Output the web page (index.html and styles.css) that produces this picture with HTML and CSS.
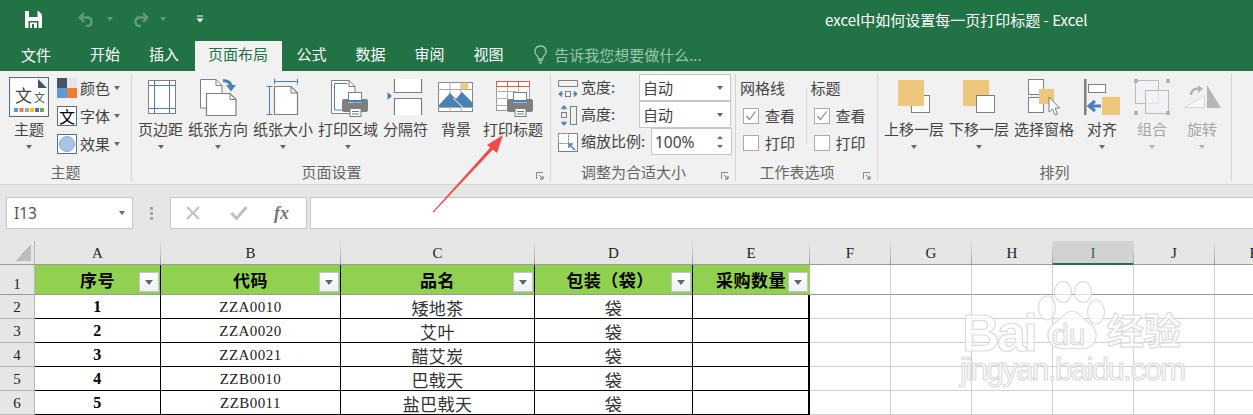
FILE: index.html
```html
<!DOCTYPE html>
<html lang="zh-CN">
<head>
<meta charset="utf-8">
<title>excel中如何设置每一页打印标题 - Excel</title>
<link rel="stylesheet" href="styles.css">
</head>
<body>
<svg class="defs" width="0" height="0">
  <symbol id="launch" viewBox="0 0 8 8">
    <path d="M.5 7V.5H7" fill="none" stroke="#8a8a8a"/>
    <path d="M3 3l4 4M7 4v3H4" fill="none" stroke="#6a6a6a"/>
  </symbol>
</svg>
<div class="app">
  <header class="titlebar">
    <div class="qat">
      <svg class="save" width="17" height="17" viewBox="0 0 17 17"><path d="M0 0h13.500L17 3.500V17H0z" fill="#fff"/><rect x="4" y="0" width="8.500" height="6" fill="#217346"/><rect x="3.500" y="10" width="10" height="7" fill="#217346"/><rect x="5" y="11.500" width="7" height="5.500" fill="#fff"/><rect x="7" y="13" width="2" height="4" fill="#217346"/></svg>
      <svg class="undo" width="18" height="15" viewBox="0 0 18 15"><path d="M2 5.500h8.500a4.500 4.500 0 0 1 0 8.500H8M6 1L1.800 5.500 6 10" fill="none" stroke="#5d9c7c" stroke-width="2.400"/></svg>
      <i class="qcaret first"></i>
      <svg class="redo" width="18" height="15" viewBox="0 0 18 15"><path d="M16 5.500H7.500a4.500 4.500 0 0 0 0 8.500H10M12 1l4.200 4.500L12 10" fill="none" stroke="#5d9c7c" stroke-width="2.400"/></svg>
      <i class="qcaret second"></i>
      <svg class="custom" width="8" height="8" viewBox="0 0 8 8"><path d="M1 1h6" stroke="#fff"/><path d="M.5 3.500h7L4 7.500z" fill="#fff"/></svg>
    </div>
    <div class="doc-title">excel中如何设置每一页打印标题 - Excel</div>
  </header>

  <nav class="tabs">
    <span class="tab file">文件</span>
    <span class="tab">开始</span>
    <span class="tab">插入</span>
    <span class="tab active">页面布局</span>
    <span class="tab">公式</span>
    <span class="tab">数据</span>
    <span class="tab">审阅</span>
    <span class="tab">视图</span>
    <span class="tell">
      <svg width="13" height="20" viewBox="0 0 13 20"><path d="M6.500 1a5.500 5.500 0 0 1 3.300 9.900c-.8.700-1.100 1.600-1.100 3.100H4.300c0-1.500-.3-2.400-1.100-3.100A5.500 5.500 0 0 1 6.500 1z" fill="none" stroke="#9cc4ae" stroke-width="1.300"/><path d="M4.500 15.500h4M5 17.800h3" stroke="#9cc4ae" stroke-width="1.500"/></svg>
      告诉我您想要做什么...
    </span>
  </nav>

  <section class="ribbon">
    <div class="group g-theme">
      <div class="body">
        <div class="big theme-btn">
          <span class="theme-icon">
            <svg width="36" height="36" viewBox="0 0 36 36"><path d="M0 0h27l9 9v27H0z" fill="#fff"/><path d="M27 0l9 9h-9z" fill="#44546a"/><text x="4" y="23" class="th-a">文</text><text x="23" y="23" class="th-b">文</text><rect x="3" y="29" width="4" height="4" fill="#5b9bd5"/><rect x="8.500" y="29" width="4" height="4" fill="#ed7d31"/><rect x="14" y="29" width="4" height="4" fill="#a5a5a5"/><rect x="19" y="29" width="4" height="4" fill="#ffc000"/><rect x="24" y="29" width="4" height="4" fill="#4472c4"/><rect x="29" y="29" width="4" height="4" fill="#70ad47"/></svg>
          </span>
          <span class="lbl">主题</span><i class="caret"></i>
        </div>
        <div class="theme-list">
          <div class="mini"><span class="swatch colors"><b></b><b></b><b></b><b></b></span><span class="mini-l">颜色</span><i class="caret"></i></div>
          <div class="mini"><span class="swatch font-s">文</span><span class="mini-l">字体</span><i class="caret"></i></div>
          <div class="mini"><span class="swatch effect"><b></b></span><span class="mini-l">效果</span><i class="caret"></i></div>
        </div>
      </div>
      <div class="glabel">主题</div>
    </div>

    <div class="group g-page">
      <div class="body bigs">
        <div class="big"><svg width="30" height="42" viewBox="0 0 30 42"><rect x="2.500" y="3.500" width="27" height="33" fill="#fff" stroke="#7f7f7f"/><path d="M8.500 4v32M23.500 4v32M3 8.500h26M3 31.500h26" stroke="#4a80b8"/></svg><span class="lbl">页边距</span><i class="caret"></i></div>
        <div class="big"><svg width="40" height="42" viewBox="0 0 40 42"><path d="M2.500 2.500H18l6 6V31H2.500z" fill="#fff" stroke="#7f7f7f"/><path d="M18 2.500v6h6" fill="none" stroke="#7f7f7f"/><path d="M8.500 16.500H32l6 6v16H8.500z" fill="#fff" stroke="#7f7f7f" stroke-width="1.200"/><path d="M32 16.500v6h6" fill="none" stroke="#7f7f7f"/><path d="M25 3.500c5 .5 8 2.500 8 6" fill="none" stroke="#4a80b8" stroke-width="3"/><path d="M28 8h10l-5 6.500z" fill="#4a80b8"/></svg><span class="lbl">纸张方向</span><i class="caret"></i></div>
        <div class="big"><svg width="40" height="42" viewBox="0 0 40 42"><path d="M11.500 9.500H28l6.500 6.500v21.500h-23z" fill="#fff" stroke="#7f7f7f" stroke-width="1.200"/><path d="M28 9.500V16h6.500" fill="none" stroke="#7f7f7f"/><path d="M11.500 4.500h23M11.500 1.500v6M34.500 1.500v6M6.500 9.500v28M3.500 9.500h6M3.500 37.500h6" fill="none" stroke="#4a80b8"/></svg><span class="lbl">纸张大小</span><i class="caret"></i></div>
        <div class="big"><svg width="44" height="42" viewBox="0 0 44 42"><path d="M5.500 3.500H23l6 6v27H5.500z" fill="#fff" stroke="#7f7f7f"/><path d="M23 3.500v6h6" fill="none" stroke="#7f7f7f"/><path d="M21 6.500H8.500V33H17" fill="none" stroke="#4a80b8"/>
          <g transform="translate(16 15)"><rect x="6.500" y=".5" width="13" height="9" fill="#fff" stroke="#7f7f7f"/><path d="M2 7h4v4h14V7h4a2 2 0 0 1 2 2v9a2 2 0 0 1-2 2H2a2 2 0 0 1-2-2V9a2 2 0 0 1 2-2z" fill="#7f7f7f"/><rect x="5" y="8" width="16" height="2.500" fill="#4a80b8"/><rect x="8" y="16.500" width="11" height="8" fill="#fff" stroke="#7f7f7f"/><path d="M10 19.500h7M10 22h7" stroke="#4a80b8"/></g>
        </svg><span class="lbl">打印区域</span><i class="caret"></i></div>
        <div class="big"><svg width="44" height="42" viewBox="0 0 44 42"><path d="M3.500 15L8 19l-4.500 4z" fill="#4a80b8"/><path d="M10.500 2H37.500V15.500H10.500z" fill="#fff"/><path d="M10.500 2v13.500h27V2" fill="none" stroke="#7f7f7f" stroke-width="1.200"/><path d="M10.500 21.500h27V38h-27z" fill="#fff"/><path d="M10.500 38V21.500h27V38" fill="none" stroke="#7f7f7f" stroke-width="1.200"/></svg><span class="lbl">分隔符</span></div>
        <div class="big bg-btn"><svg width="40" height="42" viewBox="0 0 40 42"><rect x="2.500" y="5.500" width="34" height="29" fill="#fff" stroke="#8a8a8a"/><path d="M14 5v30M25 5v30M2 12.500h35M2 30.500h35" stroke="#a8a8a8"/><path d="M3 28l11-12 6 6 6-7 11 11v4H3z" fill="#4a80b8"/><path d="M17 21l10 9.500" stroke="#fff"/><circle cx="29" cy="9" r="3.500" fill="#f0c878"/></svg><span class="lbl">背景</span></div>
        <div class="big pt-btn"><svg width="44" height="42" viewBox="0 0 44 42"><rect x="5.500" y="4.500" width="33" height="29" fill="#fff" stroke="#9a9a9a"/><path d="M5 14.500h20M5 21.500h11M5 28.500h11M16.500 9v25M27.500 9v6" stroke="#b0b0b0"/><path d="M5.500 4.500h33v5h-33zM16.500 4.500v5M27.500 4.500v5" fill="none" stroke="#d9603b"/>
          <g transform="translate(16 15)"><rect x="6.500" y=".5" width="13" height="9" fill="#fff" stroke="#7f7f7f"/><path d="M2 7h4v4h14V7h4a2 2 0 0 1 2 2v9a2 2 0 0 1-2 2H2a2 2 0 0 1-2-2V9a2 2 0 0 1 2-2z" fill="#7f7f7f"/><rect x="5" y="8" width="16" height="2.500" fill="#4a80b8"/><rect x="8" y="16.500" width="11" height="8" fill="#fff" stroke="#7f7f7f"/><path d="M10 19.500h7M10 22h7" stroke="#4a80b8"/></g>
        </svg><span class="lbl">打印标题</span></div>
      </div>
      <div class="glabel has-launch">页面设置</div>
      <svg class="launch" width="8" height="8"><use href="#launch"/></svg>
    </div>

    <div class="group g-fit">
      <div class="body fit">
        <div class="fit-row">
          <svg width="20" height="24" viewBox="0 0 20 24"><path d="M.5 4.500h19v6" fill="none" stroke="#7f7f7f"/><path d="M.5 4.500v6M.5 10.500h19" stroke="#7f7f7f"/><path d="M1 18h4M15 18h4M1 18l3-2.500M1 18l3 2.500M19 18l-3-2.500M19 18l-3 2.500" fill="none" stroke="#4a80b8" stroke-width="1.300"/><rect x="7.500" y="15.500" width="5" height="5" fill="none" stroke="#7f7f7f"/></svg>
          <span class="fit-l">宽度:</span>
          <div class="sel">自动<i class="caret"></i></div>
        </div>
        <div class="fit-row">
          <svg width="20" height="24" viewBox="0 0 20 24"><rect x="12.500" y="3.500" width="6" height="18" fill="none" stroke="#7f7f7f"/><path d="M6 3v4M6 18v4M6 3L3.500 6M6 3l2.500 3M6 22l-2.500-3M6 22l2.500-3" fill="none" stroke="#4a80b8" stroke-width="1.300"/><rect x="3.500" y="9.500" width="5" height="5" fill="none" stroke="#7f7f7f"/></svg>
          <span class="fit-l">高度:</span>
          <div class="sel">自动<i class="caret"></i></div>
        </div>
        <div class="fit-row">
          <svg width="20" height="24" viewBox="0 0 20 24"><rect x=".5" y="3.500" width="19" height="18" fill="#fff" stroke="#7f7f7f"/><rect x=".5" y="3.500" width="10" height="10" fill="#fff" stroke="#7f7f7f" stroke-dasharray="2 1"/><path d="M11 14l6 6M11 18v-4h4" fill="none" stroke="#4a80b8" stroke-width="1.500"/></svg>
          <span class="fit-l wide">缩放比例:</span>
          <div class="spin">100%<span class="arrows"><i class="up"></i><i class="down"></i></span></div>
        </div>
      </div>
      <div class="glabel has-launch">调整为合适大小</div>
      <svg class="launch" width="8" height="8"><use href="#launch"/></svg>
    </div>

    <div class="group g-opt">
      <div class="body opts">
        <div class="opt-col first">
          <div class="opt-h">网格线</div>
          <div class="chk"><span class="box on"><svg width="14" height="14" viewBox="0 0 14 14"><path d="M2.500 7l3 3.500 6-8" fill="none" stroke="#8a8a8a" stroke-width="1.200"/></svg></span>查看</div>
          <div class="chk"><span class="box"></span>打印</div>
        </div>
        <div class="opt-col">
          <div class="opt-h">标题</div>
          <div class="chk"><span class="box on"><svg width="14" height="14" viewBox="0 0 14 14"><path d="M2.500 7l3 3.500 6-8" fill="none" stroke="#8a8a8a" stroke-width="1.200"/></svg></span>查看</div>
          <div class="chk"><span class="box"></span>打印</div>
        </div>
      </div>
      <div class="glabel has-launch">工作表选项</div>
      <svg class="launch" width="8" height="8"><use href="#launch"/></svg>
    </div>

    <div class="group g-arr">
      <div class="body bigs">
        <div class="big"><svg width="44" height="42" viewBox="0 0 44 42"><rect x="19.500" y="18.500" width="18" height="17" fill="#fff" stroke="#7f7f7f"/><rect x="6" y="3" width="26" height="26" fill="#eec77c"/></svg><span class="lbl">上移一层</span><i class="caret"></i></div>
        <div class="big"><svg width="44" height="42" viewBox="0 0 44 42"><rect x="6" y="3" width="26" height="26" fill="#eec77c"/><rect x="19.500" y="18.500" width="18" height="17" fill="#fff" stroke="#7f7f7f"/></svg><span class="lbl">下移一层</span><i class="caret"></i></div>
        <div class="big"><svg width="44" height="42" viewBox="0 0 44 42"><rect x="6.500" y="2.500" width="15" height="15" fill="#fff" stroke="#7f7f7f"/><rect x="6.500" y="20.500" width="15" height="15" fill="#fff" stroke="#7f7f7f"/><rect x="17" y="12" width="15" height="15" fill="#eec77c"/><path d="M27 20v15l3.500-3 2.500 6 2.500-1-2.500-6h4.500z" fill="#fff" stroke="#7f7f7f"/></svg><span class="lbl">选择窗格</span></div>
        <div class="big align-btn"><svg width="44" height="42" viewBox="0 0 44 42"><rect x="4" y="2" width="2.500" height="36" fill="#7f7f7f"/><rect x="8.500" y="7.500" width="17" height="8" fill="#fff" stroke="#7f7f7f"/><rect x="22" y="20" width="18" height="18" fill="#eec77c"/><path d="M21 29H11M15 24l-6 5 6 5" fill="none" stroke="#4a80b8" stroke-width="3"/></svg><span class="lbl">对齐</span><i class="caret"></i></div>
        <div class="big off"><svg width="44" height="42" viewBox="0 0 44 42"><rect x="5.500" y="3.500" width="23" height="23" fill="#f4f1f6" stroke="#bbb"/><rect x="15.500" y="13.500" width="23" height="23" fill="#f4f1f6" fill-opacity=".7" stroke="#bbb"/><path d="M4 2h4v4H4zM36 2h4v4h-4zM4 34h4v4H4zM36 34h4v4h-4z" fill="#b5b5b5"/></svg><span class="lbl">组合</span><i class="caret"></i></div>
        <div class="big off"><svg width="44" height="42" viewBox="0 0 44 42"><path d="M27 8l14 23H27z" fill="#b5b5b5"/><path d="M4.500 30.500L24.500 18.500v12z" fill="#f6f6f6" stroke="#d8d8d8"/><path d="M11 18c0-5 4-7 9-6" fill="none" stroke="#b5b5b5" stroke-width="2.500"/><path d="M18 8l5 4-5 4z" fill="#b5b5b5"/></svg><span class="lbl">旋转</span><i class="caret"></i></div>
      </div>
      <div class="glabel">排列</div>
    </div>
  </section>

  <section class="formula">
    <div class="namebox">I13<i class="caret"></i></div>
    <span class="grip"><b></b><b></b><b></b></span>
    <div class="fxbox">
      <svg width="16" height="16" viewBox="0 0 16 16"><path d="M2 2l12 12M14 2L2 14" stroke="#c0c0c0" stroke-width="2"/></svg>
      <svg width="18" height="16" viewBox="0 0 18 16"><path d="M1.500 8l5 5.500L16.500 2" fill="none" stroke="#c0c0c0" stroke-width="3"/></svg>
      <span class="fx">fx</span>
    </div>
    <div class="finput"></div>
  </section>

  <section class="sheet">
    <div class="corner"><i></i></div>
    <div class="ch">A</div><div class="ch">B</div><div class="ch">C</div><div class="ch">D</div><div class="ch">E</div><div class="ch">F</div><div class="ch">G</div><div class="ch">H</div><div class="ch sel-col">I</div><div class="ch">J</div><div class="ch">K</div>

    <div class="rh tall">1</div>
    <div class="th">序号<i class="filter"></i></div><div class="th">代码<i class="filter"></i></div><div class="th">品名<i class="filter"></i></div><div class="th nudge">包装（袋）<i class="filter"></i></div><div class="th end">采购数量<i class="filter"></i></div>
    <div class="e top"></div><div class="e top"></div><div class="e top"></div><div class="e top"></div><div class="e top"></div><div class="e top"></div>

    <div class="rh">2</div>
    <div class="d num">1</div><div class="d code">ZZA0010</div><div class="d">矮地茶</div><div class="d">袋</div><div class="d end"></div>
    <div class="e"></div><div class="e"></div><div class="e"></div><div class="e"></div><div class="e"></div><div class="e"></div>

    <div class="rh">3</div>
    <div class="d num">2</div><div class="d code">ZZA0020</div><div class="d">艾叶</div><div class="d">袋</div><div class="d end"></div>
    <div class="e"></div><div class="e"></div><div class="e"></div><div class="e"></div><div class="e"></div><div class="e"></div>

    <div class="rh">4</div>
    <div class="d num">3</div><div class="d code">ZZA0021</div><div class="d">醋艾炭</div><div class="d">袋</div><div class="d end"></div>
    <div class="e"></div><div class="e"></div><div class="e"></div><div class="e"></div><div class="e"></div><div class="e"></div>

    <div class="rh">5</div>
    <div class="d num">4</div><div class="d code">ZZB0010</div><div class="d">巴戟天</div><div class="d">袋</div><div class="d end"></div>
    <div class="e"></div><div class="e"></div><div class="e"></div><div class="e"></div><div class="e"></div><div class="e"></div>

    <div class="rh">6</div>
    <div class="d num">5</div><div class="d code">ZZB0011</div><div class="d">盐巴戟天</div><div class="d">袋</div><div class="d end"></div>
    <div class="e"></div><div class="e"></div><div class="e"></div><div class="e"></div><div class="e"></div><div class="e"></div>
  </section>

  <svg class="watermark" width="250" height="115" viewBox="950 275 250 115">
    <g fill="#fff" fill-opacity=".7" stroke="#dcdcdc" stroke-width="1.200">
      <ellipse cx="1063" cy="292" rx="8.500" ry="10.500"/>
      <ellipse cx="1083" cy="292" rx="8.500" ry="10.500"/>
      <ellipse cx="1047" cy="308" rx="8.500" ry="12"/>
      <ellipse cx="1096" cy="312" rx="8.500" ry="12"/>
      <path d="M1072 311c7 0 10 7 16 11 7 5 10 11 7 19-3 7-11 9-23 7-12 2-20 0-23-7-3-8 0-14 7-19 6-4 9-11 16-11z"/>
      <text x="962" y="351" class="wm-b" textLength="76">Bai</text>
      <text x="1052" y="345" class="wm-d">du</text>
      <text x="1107" y="345" class="wm-z">经验</text>
      <text x="960" y="380" class="wm-u" textLength="226">jingyan.baidu.com</text>
    </g>
  </svg>

  <svg class="red-arrow" width="90" height="100" viewBox="0 0 90 100"><path d="M7.500 92L68 24.500 70.500 26.800 8.500 92.500z" fill="#f04a48"/><path d="M78 15L62 25 72 33z" fill="#f04a48"/></svg>
</div>
</body>
</html>
```
FILE: styles.css
```css
* { box-sizing: border-box; }
html, body { margin: 0; padding: 0; overflow: hidden; }
body { background: #fff; font-family: "Noto Sans CJK SC", "Noto Sans", sans-serif; color: #444; }
i { font-style: normal; display: block; }
.defs { position: absolute; }
.app { position: relative; width: 1253px; height: 415px; overflow: hidden; }

/* title bar */
.titlebar { height: 41px; background: #217346; display: flex; align-items: flex-start; }
.qat { width: 825px; height: 41px; display: flex; align-items: center; padding-left: 25px; flex: none; }
.save { margin-top: -3px; }
.undo { margin: -2px 0 0 36px; }
.redo { margin: -2px 0 0 18px; }
.qcaret { width: 0; height: 0; border: 3.5px solid transparent; border-top: 4px solid #5d9c7c; border-bottom: 0; margin-top: -3px; }
.qcaret.first { margin-left: 11px; }
.qcaret.second { margin-left: 11px; }
.custom { margin: -3px 0 0 30px; }
.doc-title { color: #fff; font-size: 15px; line-height: 39px; white-space: nowrap; width: 300px; }

/* tabs */
.tabs { height: 30px; background: #217346; display: flex; align-items: stretch; }
.tab { color: #fff; font-size: 15px; line-height: 26px; padding: 0 14.5px; white-space: nowrap; }
.tab.file { margin-left: 6.5px; margin-right: 10px; line-height: 28px; }
.tab.active { background: #f1f1f1; color: #217346; padding: 0 14px 0 13px; margin-left: 1.5px; }
.tell { margin-left: 16px; color: #9cc4ae; font-size: 15px; line-height: 26px; height: 28px; display: flex; align-items: center; gap: 7px; white-space: nowrap; }

/* ribbon */
.ribbon { height: 114px; background: #f1f1f1; border-bottom: 1px solid #d4d4d4; display: flex; padding-top: 3px; }
.group { position: relative; height: 107px; display: flex; flex-direction: column; border-right: 1px solid #d4d4d4; font-size: 15px; flex: none; }
.body { height: 89px; display: flex; }
.glabel { height: 18px; line-height: 18px; text-align: center; color: #666; font-size: 15px; white-space: nowrap; }
.glabel.has-launch { padding-right: 19px; }
.launch { position: absolute; right: 6px; bottom: 1px; }
.g-theme { width: 132px; }
.g-page { width: 419px; }
.g-fit { width: 185px; }
.g-opt { width: 142px; }
.g-arr { width: 354px; }
.bigs { padding: 3px 0 0 6px; gap: 5px; }
.big { display: flex; flex-direction: column; align-items: center; height: 86px; }
.big svg { margin: 0 -10px; flex: none; }
.lbl { line-height: 18px; margin-top: 1px; white-space: nowrap; }
.big .caret { margin-top: 7px; }
.caret { width: 0; height: 0; border: 3.5px solid transparent; border-top: 4px solid #666; border-bottom: 0; flex: none; }
.bg-btn { margin-left: 8px; }
.pt-btn { margin-left: 7px; }
.align-btn { margin-left: 8px; }
.off { margin-left: 15px; color: #a6a6a6; }
.off .caret { border-top-color: #b5b5b5; }

/* theme group */
.g-theme .body { padding: 3px 0 0 9px; }
.theme-btn { width: 40px; }
.theme-icon { width: 40px; height: 40px; border: 1px solid #5b6b80; padding: 1px; display: block; margin-bottom: 2px; flex: none; }
.theme-icon svg { margin: 0; display: block; }
.th-a { font-size: 17px; fill: #444; font-family: "Noto Sans CJK SC", sans-serif; }
.th-b { font-size: 11px; fill: #444; font-family: "Noto Sans CJK SC", sans-serif; }
.theme-list { margin-left: 8px; display: flex; flex-direction: column; gap: 8px; padding-top: 1px; }
.mini { display: flex; align-items: center; height: 20px; gap: 3px; }
.mini-l { margin-top: -2px; }
.mini .caret { margin-left: 1px; }
.swatch { width: 20px; height: 20px; border: 1px solid #5b6b80; flex: none; background: #fff; }
.colors { display: grid; grid-template-columns: 1fr 1fr; grid-template-rows: 1fr 1fr; border: 0; }
.colors b:nth-child(1) { background: #44546a; }
.colors b:nth-child(2) { background: #e7e6e6; }
.colors b:nth-child(3) { background: #5b9bd5; }
.colors b:nth-child(4) { background: #ed7d31; }
.font-s { color: #000; font-size: 16px; line-height: 18px; text-align: center; }
.effect { display: flex; align-items: center; justify-content: center; }
.effect b { width: 16px; height: 16px; border-radius: 50%; background: #a9c4e8; border: 1px solid #7fa8dc; }

/* fit group */
.fit { flex-direction: column; padding-left: 7px; }
.fit-row { height: 27px; display: flex; align-items: center; flex: none; }
.fit-l { margin: -2px 0 0 3px; width: 58px; white-space: nowrap; }
.fit-l.wide { width: 70px; }
.sel, .spin { height: 27px; background: #fff; border: 1px solid #c6c6c6; display: flex; align-items: center; color: #444; }
.sel { width: 92px; padding: 0 7px 0 3px; justify-content: space-between; }
.spin { width: 81px; padding: 0 8px 0 3px; justify-content: space-between; font-family: "Noto Sans", sans-serif; font-size: 15.500px; }
.arrows { display: flex; flex-direction: column; gap: 6px; }
.up, .down { width: 0; height: 0; border: 3px solid transparent; }
.up { border-bottom: 3.500px solid #666; border-top: 0; }
.down { border-top: 3.500px solid #666; border-bottom: 0; }

/* sheet options */
.opts { padding: 5px 0 0 4px; }
.opt-col { width: 71px; padding-left: 4px; }
.opt-col.first { width: 67px; padding-left: 0; position: relative; }
.opt-col.first::after { content: ""; position: absolute; right: 0; top: 9px; height: 56px; width: 1px; background: #d4d4d4; }
.opt-h { height: 23px; line-height: 18px; white-space: nowrap; }
.chk { height: 27px; display: flex; align-items: center; gap: 6px; padding-left: 3px; white-space: nowrap; }
.box { width: 16px; height: 16px; background: #fff; border: 1px solid #ababab; flex: none; display: block; }
.box svg { display: block; margin: 0; }

/* formula bar */
.formula { height: 56px; background: #e6e6e6; display: flex; align-items: flex-start; padding: 12px 0 0 6px; }
.namebox { width: 127px; height: 32px; background: #fff; border: 1px solid #c6c6c6; display: flex; align-items: center; justify-content: space-between; padding: 0 7px; color: #555; font: 15.500px "Noto Sans", sans-serif; flex: none; }
.grip { width: 37px; height: 32px; flex: none; display: flex; flex-direction: column; align-items: center; justify-content: center; gap: 2px; }
.grip b { width: 3px; height: 3px; background: #a6a6a6; }
.fxbox { width: 137px; height: 32px; background: #fff; border: 1px solid #c6c6c6; display: flex; align-items: center; padding-left: 14px; gap: 29px; flex: none; }
.fx { font: italic bold 18px "Liberation Serif", serif; color: #777; margin-left: -3px; }
.finput { width: 943px; height: 32px; margin-left: 3px; background: #fff; border: 1px solid #c6c6c6; border-right: 0; flex: none; }

/* sheet */
.sheet { display: grid; grid-template-columns: 35px 126px 180px 194px 158px 117px repeat(6, 81px); grid-template-rows: 24px 30px repeat(5, 24px); width: 1296px; color: #111; font-family: "Liberation Serif", "Noto Sans CJK SC", serif; }
.corner { background: #e6e6e6; border-right: 1px solid #b5b5b5; border-bottom: 1px solid #9a9a9a; position: relative; }
.corner i { position: absolute; left: 15px; top: 4px; width: 16px; height: 16px; background: linear-gradient(135deg, transparent 50%, #bdbdbd 50%); }
.ch { background: #e6e6e6; border-right: 1px solid; border-image: linear-gradient(#e6e6e6, #9a9a9a) 1; border-bottom: 0; box-shadow: inset 0 -1px 0 #9a9a9a; text-align: center; font-size: 15px; line-height: 24px; color: #222; }
.ch.sel-col { background: #d2d2d2; color: #217346; box-shadow: inset 0 -2px 0 #217346; }
.rh { background: #e6e6e6; border-right: 1px solid #b5b5b5; border-bottom: 1px solid #b8b8b8; text-align: center; font-size: 15px; line-height: 25px; color: #222; }
.rh.tall { line-height: 39px; border-bottom-color: #9a9a9a; }
.th { position: relative; background: #92d050; border-right: 1px solid #000; border-bottom: 1px solid #9a9a9a; display: flex; align-items: center; justify-content: center; font: bold 17px "Noto Sans CJK SC", sans-serif; letter-spacing: .5px; color: #000; padding-bottom: 1px; }
.th.nudge { padding-right: 7px; }
.th.end { border-right: 1px solid #92d050; }
.filter { position: absolute; right: 1px; bottom: 2px; width: 20px; height: 20px; background: linear-gradient(#fff, #eef0f5); border: 1px solid #c0c4cc; }
.filter::after { content: ""; position: absolute; left: 5px; top: 7px; border: 4px solid transparent; border-top: 5px solid #666; border-bottom: 0; }
.d { border-right: 1px solid #000; border-bottom: 1px solid #000; display: flex; align-items: center; justify-content: center; font: 17px "Noto Sans CJK SC", sans-serif; letter-spacing: .4px; color: #333; padding-top: 1px; white-space: nowrap; }
.d.num { font: bold 16px "Liberation Serif", serif; color: #000; }
.d.code { font: 15px "Liberation Serif", serif; letter-spacing: .45px; color: #222; }
.d.end { border-right: 2px solid #000; }
.e { border-right: 1px solid #d0d0d0; border-bottom: 1px solid #d0d0d0; }
.e.top { border-bottom-color: #9a9a9a; }

/* overlays */
.watermark { position: absolute; left: 950px; top: 275px; }
.wm-b { font: bold 52px "Liberation Sans", sans-serif; }
.wm-d { font: 30px "Liberation Sans", sans-serif; }
.wm-z { font: bold 37px "Noto Sans CJK SC", sans-serif; }
.wm-u { font: 31px "Liberation Sans", sans-serif; }
.red-arrow { position: absolute; left: 425px; top: 120px; }
```
